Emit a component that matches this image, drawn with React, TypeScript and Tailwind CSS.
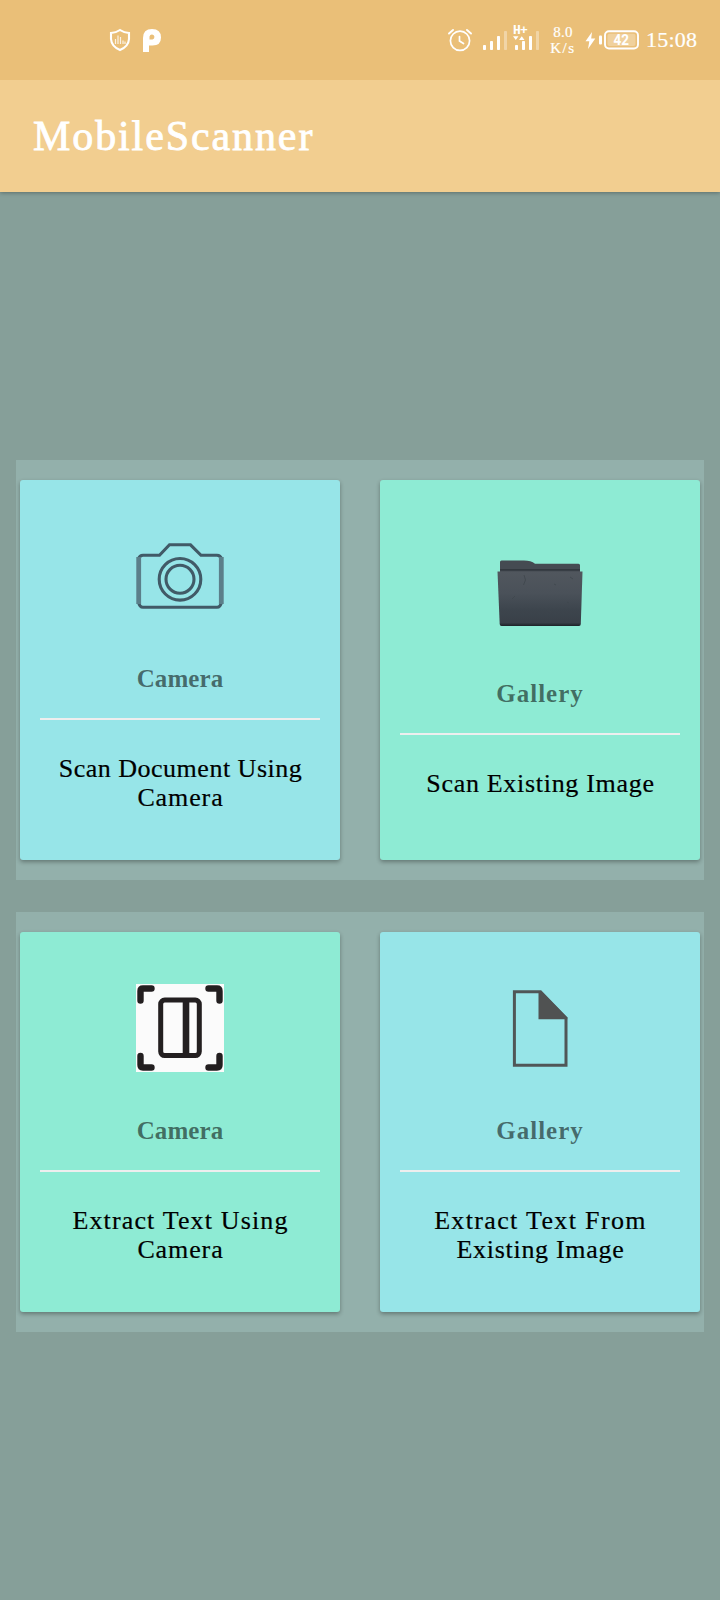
import type { ReactNode } from "react";

type Line = { text: string; spacing: string };

function CameraIcon() {
  return (
    <svg className="block h-[88px] w-[88px]" viewBox="0 -6 88 88" fill="none" stroke="#415a67" strokeWidth="3.1">
      <path d="M2.500 21Q3.500 17.300 7 17.300H23.500L33.500 6.800H54.500L65 17.300H81Q84.500 17.300 85.500 21" />
      <path d="M2.500 64Q3.500 69.300 7 69.300H81Q84.500 69.300 85.500 64" />
      <path d="M2.700 19V66M85.300 19V66" stroke="#5b7f8a" strokeWidth="4.800" />
      <circle cx="44" cy="41.300" r="20.800" />
      <circle cx="44" cy="41.300" r="14" />
    </svg>
  );
}

function FolderIcon() {
  return (
    <svg className="block h-[88px] w-[88px]" viewBox="0 -6 88 88">
      <defs>
        <linearGradient id="folderFront" x1="0" y1="0" x2="0" y2="1">
          <stop offset="0" stopColor="#51575e" />
          <stop offset="0.4" stopColor="#4a5159" />
          <stop offset="0.7" stopColor="#3d454d" />
          <stop offset="0.94" stopColor="#394048" />
          <stop offset="1" stopColor="#1c2227" />
        </linearGradient>
      </defs>
      <path d="M4 28V9Q4 7.500 5.500 7.500H28Q35 7.500 39 10.700H82.500Q84 10.700 84 12.200V28Z" fill="#454b52" />
      <path d="M4 16.800H84" stroke="#2c3238" strokeWidth="1.300" />
      <path d="M1.500 18.500H86.500L84.800 71Q84.700 73 83 73H5.500Q3.800 73 3.700 71Z" fill="url(#folderFront)" />
      <path d="M28 22l1.500 5-2 5M58 31l2 1M74 24l3 2M16 46l3-3M51 57l4 2M71 49l2 1" stroke="#3f464d" strokeWidth="0.800" fill="none" />
    </svg>
  );
}

function ScanIcon() {
  return (
    <svg className="block h-[88px] w-[88px]" viewBox="0 0 88 88" fill="none" stroke="#231f20" strokeLinecap="round">
      <rect width="88" height="88" fill="#fbfbfb" stroke="none" />
      <path d="M4.500 16.500V7Q4.500 4.500 7 4.500H15.500M72.500 4.500H81Q83.500 4.500 83.500 7V16.500M83.500 72V81Q83.500 83.500 81 83.500H72.500M15.500 83.500H7Q4.500 83.500 4.500 81V72" strokeWidth="6.400" />
      <rect x="24.700" y="16" width="38.600" height="55.600" rx="4" strokeWidth="5" />
      <path d="M50 18V70" strokeWidth="6.600" strokeLinecap="butt" />
    </svg>
  );
}

function FileIcon() {
  return (
    <svg className="block h-[88px] w-[88px]" viewBox="0 0 88 88">
      <path d="M18.400 7.700H44.500L70 34V81.300H18.400Z" fill="none" stroke="#505657" strokeWidth="3" />
      <path d="M42.500 7H45L71.300 33.500V35.300H42.500Z" fill="#505252" />
    </svg>
  );
}

function Card({ icon, label, lines, tone, offset, labelSpacing }: {
  icon: ReactNode; label: string; lines: Line[]; tone: string; offset: string; labelSpacing: string;
}) {
  return (
    <section className={`flex h-[380px] w-[320px] flex-col items-center rounded-[3px] px-5 shadow-[0_2px_4px_rgba(0,0,0,0.32)] ${tone} ${offset}`}>
      {icon}
      <h2 className={`mt-[44px] text-[25px] leading-[29px] font-bold text-black/55 ${labelSpacing}`}>{label}</h2>
      <hr className="mt-[25px] h-[2px] w-full border-0 bg-[#eeeeee]" />
      <p className="mt-[34px] pl-px text-center text-[26px] leading-[29px] whitespace-nowrap text-black [-webkit-text-stroke:0.2px_black]">
        {lines.map((line) => (
          <span key={line.text} className={`block ${line.spacing}`}>{line.text}</span>
        ))}
      </p>
    </section>
  );
}

function StatusBar() {
  return (
    <div className="relative z-10 flex h-20 items-center bg-[#eabf78] text-white">
      <svg className="ml-[109px] h-6 w-[22px]" viewBox="0 0 22 24" fill="none" stroke="white">
        <path d="M11 2Q15 4.700 20 5V11Q19.500 18.500 11 22Q2.500 18.500 2 11V5Q7 4.700 11 2Z" strokeWidth="2.100" />
        <path d="M6.500 16V11M9 16V7.500M11.500 16V9M14 16V12.500M16 16V13.500" strokeWidth="1.200" opacity="0.800" />
      </svg>
      <svg className="ml-3 h-6 w-[18px]" viewBox="0 0 18 24">
        <path fillRule="evenodd" fill="white" d="M0 10Q0 1 9 1Q18 1 18 9.500Q18 17.500 9.500 17.500H6V24H0ZM6.500 8.500V11.500H9.500A2.500 2.500 0 1 0 6.500 8.500Z" />
      </svg>
      <svg className="ml-[287px] h-6 w-6" viewBox="0 0 24 24" fill="none" stroke="white" strokeLinecap="round">
        <circle cx="12" cy="12.800" r="9.600" strokeWidth="1.700" />
        <path d="M1 5.500L5 2M19 2L23 5.500" strokeWidth="1.900" />
        <path d="M11.500 8.500V13L15.500 15.500" strokeWidth="1.700" />
      </svg>
      <svg className="ml-[11px] h-7 w-6" viewBox="0 0 24 28" fill="white">
        <rect y="19" width="3" height="5" rx="0.800" />
        <rect x="7" y="15" width="3" height="9" rx="0.800" />
        <rect x="14" y="10" width="3" height="14" rx="0.800" />
        <rect x="21" y="5" width="3" height="19" rx="0.800" opacity="0.350" />
      </svg>
      <div className="relative ml-[6px] h-7 w-7">
        <span className="absolute -top-[1px] left-0 font-['Liberation_Mono',monospace] text-[13px] leading-[12px] font-bold tracking-[-0.8px]">H+</span>
        <svg className="h-7 w-7" viewBox="0 0 28 28" fill="white">
          <path d="M0 10.300H5.500L2.750 14ZM6 14H11.500L8.750 10.300Z" />
          <rect x="2" y="19" width="3" height="5" rx="0.800" />
          <rect x="9" y="15" width="3" height="9" rx="0.800" />
          <rect x="16" y="10" width="3" height="14" rx="0.800" />
          <rect x="23" y="5" width="3" height="19" rx="0.800" opacity="0.350" />
        </svg>
      </div>
      <div className="ml-[7px] w-[30px] text-center text-[15px] leading-4 [-webkit-text-stroke:0.2px_white]">
        <div className="tracking-[0.2px]">8.0</div>
        <div className="tracking-[1.6px]">K/s</div>
      </div>
      <svg className="ml-[7px] h-5 w-[54px]" viewBox="0 0 54 20">
        <path d="M7 2L0.500 11.200H4.300L3 19L10.300 8.500H6.200Z" fill="white" />
        <rect x="14" y="5.500" width="3" height="9" rx="1" fill="white" />
        <rect x="20" y="1.200" width="33" height="17.300" rx="4" fill="none" stroke="white" strokeWidth="1.900" />
        <rect x="22.500" y="3.700" width="28" height="12.300" rx="2" fill="white" opacity="0.280" />
        <text x="36.300" y="15" textAnchor="middle" fill="white" fontFamily="Roboto, sans-serif" fontSize="14.500" fontWeight="700" textLength="15.500" lengthAdjust="spacingAndGlyphs">42</text>
      </svg>
      <time className="ml-[7px] text-[22px] leading-6 tracking-[0.2px] [-webkit-text-stroke:0.2px_white]">15:08</time>
    </div>
  );
}

const cyan = "bg-[#97e5e8]";
const green = "bg-[#8eebd4]";

export default function App() {
  return (
    <div className="h-[1600px] w-[720px] overflow-hidden bg-[#869f99] font-['Liberation_Serif',serif]">
      <StatusBar />
      <header className="flex h-28 items-center bg-[#f2ce90] pl-[33px] shadow-[0_1px_4px_rgba(0,0,0,0.3)]">
        <h1 className="text-[42px] leading-[48px] tracking-[1.9px] text-white [-webkit-text-stroke:0.8px_white]">MobileScanner</h1>
      </header>
      <main className="flex flex-col gap-8 px-4 pt-[268px]">
        <div className="flex h-[420px] justify-between bg-[#93b0ab] px-1 py-5">
          <Card icon={<CameraIcon />} label="Camera" tone={cyan} offset="pt-[52px]" labelSpacing="tracking-[0.1px]"
            lines={[{ text: "Scan Document Using", spacing: "tracking-[0.5px]" }, { text: "Camera", spacing: "tracking-[0.9px]" }]} />
          <Card icon={<FolderIcon />} label="Gallery" tone={green} offset="pt-[67px]" labelSpacing="tracking-[1px]"
            lines={[{ text: "Scan Existing Image", spacing: "tracking-[0.7px]" }]} />
        </div>
        <div className="flex h-[420px] justify-between bg-[#93b0ab] px-1 py-5">
          <Card icon={<ScanIcon />} label="Camera" tone={green} offset="pt-[52px]" labelSpacing="tracking-[0.1px]"
            lines={[{ text: "Extract Text Using", spacing: "tracking-[1.15px]" }, { text: "Camera", spacing: "tracking-[0.9px]" }]} />
          <Card icon={<FileIcon />} label="Gallery" tone={cyan} offset="pt-[52px]" labelSpacing="tracking-[1px]"
            lines={[{ text: "Extract Text From", spacing: "tracking-[1.35px]" }, { text: "Existing Image", spacing: "tracking-[0.7px]" }]} />
        </div>
      </main>
    </div>
  );
}
